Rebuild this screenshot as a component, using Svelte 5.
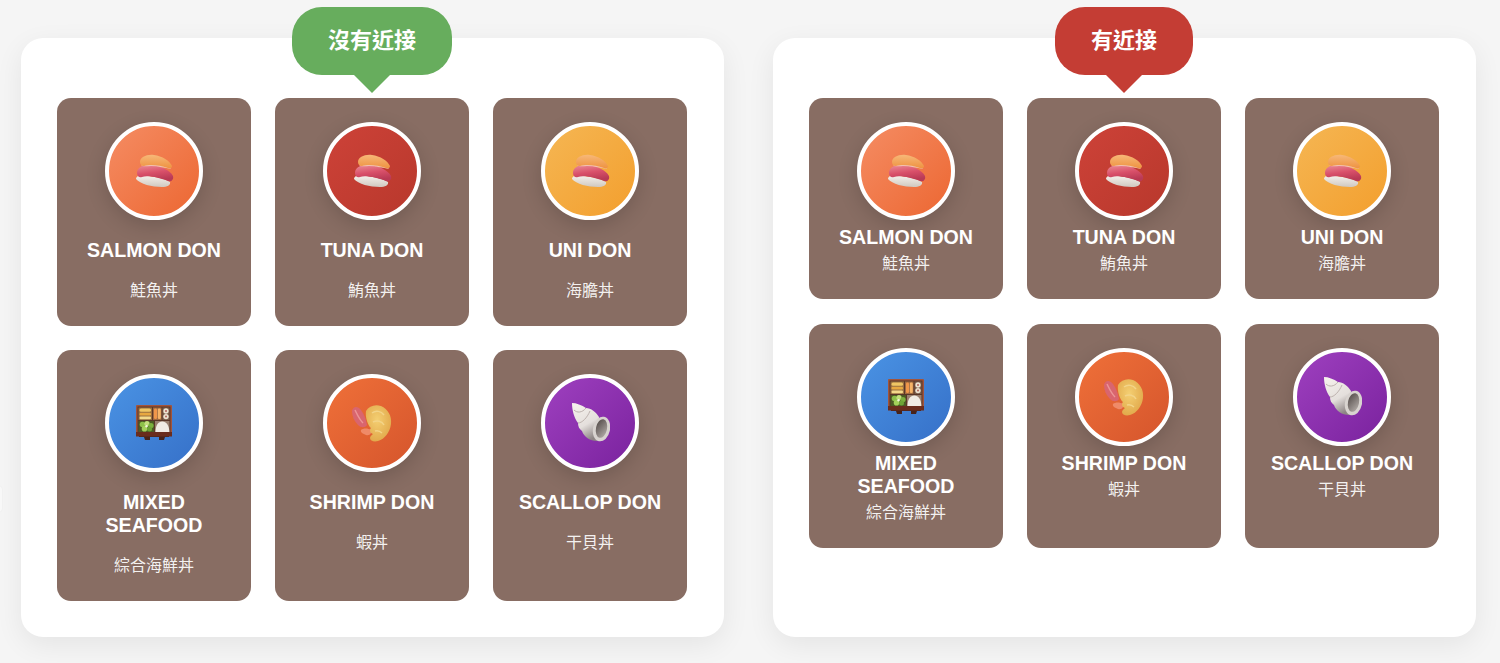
<script>
  const dons = [
    { name: 'SALMON DON', sub: '鮭魚丼', icon: 'sushi', bg: 'salmon' },
    { name: 'TUNA DON', sub: '鮪魚丼', icon: 'sushi', bg: 'tuna' },
    { name: 'UNI DON', sub: '海膽丼', icon: 'sushi', bg: 'uni' },
    { name: 'MIXED SEAFOOD', sub: '綜合海鮮丼', icon: 'bento', bg: 'mixed' },
    { name: 'SHRIMP DON', sub: '蝦丼', icon: 'shrimp', bg: 'shrimp' },
    { name: 'SCALLOP DON', sub: '干貝丼', icon: 'shell', bg: 'scallop' }
  ];

  // Left panel has no proximity between title and subtitle, right one does
  const panels = [
    { label: '沒有近接', tone: 'green', spacing: 'far' },
    { label: '有近接', tone: 'red', spacing: 'near' }
  ];
</script>

{#snippet sushi()}
  <svg viewBox="0 0 40 40" width="40" height="40" aria-hidden="true">
    <defs>
      <linearGradient id="tuna-slice" x1="0" y1="0" x2="0.3" y2="1">
        <stop offset="0" stop-color="#ec8f98" />
        <stop offset="0.55" stop-color="#d9506a" />
        <stop offset="1" stop-color="#b93a55" />
      </linearGradient>
      <linearGradient id="rice" x1="0" y1="0" x2="0" y2="1">
        <stop offset="0" stop-color="#f6f2ec" />
        <stop offset="1" stop-color="#cfc8c0" />
      </linearGradient>
      <linearGradient id="salmon-slice" x1="0" y1="0" x2="0" y2="1">
        <stop offset="0" stop-color="#f7b878" />
        <stop offset="1" stop-color="#ee9240" />
      </linearGradient>
    </defs>
    <path d="M2 28C2 24 8 24 14 25C22 26 32 28 36 31C37 34 33 36 28 36C18 36 6 33 2 28Z" fill="url(#rice)" />
    <path d="M3 22C3 16 10 13 18 14C27 15 36 19 39 25C40 29 37 31 34 30C26 27 14 24 8 26C5 27 3 25 3 22Z" fill="url(#tuna-slice)" />
    <path d="M7 14C10 10 18 10 24 11C30 12 35 15 37 18C31 17 24 15 17 15C13 15 9 16 7 14Z" fill="#f3c0b0" />
    <path d="M6 11C6 6 13 3 20 4C28 5 36 10 38 15C38 17 36 18 34 17C26 14 16 13 10 15C7 15 6 13 6 11Z" fill="url(#salmon-slice)" />
  </svg>
{/snippet}

{#snippet bento()}
  <svg viewBox="0 0 40 40" width="40" height="40" aria-hidden="true">
    <path d="M5 34h5l1 3h5v-3h9v3h5l1-3h4v-3H5z" fill="#47231a" />
    <rect x="2" y="2" width="36" height="31" rx="1" fill="#a3543a" />
    <rect x="2" y="29" width="36" height="4.500" fill="#6a2c1d" />
    <rect x="3.500" y="3.500" width="33" height="25.500" fill="#5a3628" />
    <rect x="4.500" y="4.500" width="13.500" height="12.500" fill="#9a7040" />
    <rect x="5.500" y="5.500" width="11.500" height="3.200" rx="1.500" fill="#f0c664" />
    <rect x="5.500" y="9.700" width="11.500" height="2.800" rx="1.200" fill="#e8a840" />
    <rect x="5.500" y="13.500" width="11.500" height="2.800" rx="1.200" fill="#f4d98a" />
    <rect x="19" y="4.500" width="8.500" height="12.500" fill="#a06a40" />
    <rect x="20" y="5.500" width="3" height="10.500" rx="1.200" fill="#f0964a" />
    <rect x="23.800" y="5.500" width="3" height="10.500" rx="1.200" fill="#f6b468" />
    <rect x="28.500" y="4.500" width="7" height="12.500" fill="#7a5c4a" />
    <circle cx="32" cy="8" r="2.700" fill="#ece2d0" />
    <circle cx="32" cy="8" r="1" fill="#b0605a" />
    <circle cx="32" cy="13.600" r="2.700" fill="#ece2d0" />
    <circle cx="32" cy="13.600" r="1" fill="#b0605a" />
    <rect x="4.500" y="18" width="15.500" height="11" fill="#4c5a24" />
    <circle cx="8.500" cy="21.500" r="2.800" fill="#8dc04a" />
    <circle cx="13" cy="20.500" r="2.600" fill="#c2e07c" />
    <circle cx="17" cy="22.500" r="2.600" fill="#7cb03e" />
    <circle cx="10.500" cy="25.800" r="2.800" fill="#a4d05a" />
    <circle cx="15.500" cy="26" r="2.500" fill="#6ea436" />
    <circle cx="12.500" cy="23.200" r="1.200" fill="#f1f5d8" />
    <rect x="21" y="18" width="14.500" height="11" fill="#9a8070" />
    <path d="M21.500 29c0-6.500 2.800-10.500 6.800-10.500s7 4 7 10.500z" fill="#f1ebe4" />
  </svg>
{/snippet}

{#snippet shrimp()}
  <svg viewBox="0 0 40 40" width="40" height="40" aria-hidden="true">
    <defs>
      <radialGradient id="prawn" cx="0.45" cy="0.4" r="0.7">
        <stop offset="0" stop-color="#f4cf72" />
        <stop offset="1" stop-color="#dfa446" />
      </radialGradient>
    </defs>
    <path d="M0 8C1 3 6 3 9 7C12 11 14 16 15 22C13 25 9 25 6 22C2 18 0 13 0 8Z" fill="#d9656e" />
    <path d="M3 7C5 11 7 16 11 20" stroke="#ec9496" stroke-width="1.500" fill="none" />
    <path d="M9 27C11 25 16 25 19 27C20 30 18 33 14 32C11 31 8 29 9 27Z" fill="#ef8a68" />
    <path d="M14 8C17 3 23 1 29 3C36 6 40 13 39 21C38 29 33 36 26 38C22 39 18 38 18 35C18 33 20 32 21 31C18 30 17 27 19 25C16 23 13 14 14 8Z" fill="url(#prawn)" />
    <path d="M20 10C24 7 29 8 32 12M21 19C25 17 30 18 32 22M23 28C26 27 28 28 30 30" stroke="#f3d488" stroke-width="1.500" fill="none" />
  </svg>
{/snippet}

{#snippet shell()}
  <svg viewBox="0 0 40 40" width="40" height="40" aria-hidden="true">
    <defs>
      <linearGradient id="shell-body" x1="0.2" y1="0" x2="0.6" y2="1">
        <stop offset="0" stop-color="#f5f1ec" />
        <stop offset="0.6" stop-color="#e4dfdc" />
        <stop offset="1" stop-color="#8d8584" />
      </linearGradient>
      <linearGradient id="shell-mouth" x1="0" y1="0" x2="1" y2="1">
        <stop offset="0" stop-color="#4e4644" />
        <stop offset="1" stop-color="#b9b2ae" />
      </linearGradient>
    </defs>
    <path d="M2 0C6 0 12 2 16 5C21 5 26 9 29 14L27 38C20 38 14 34 12 28C9 26 8 23 8 20C4 15 2 7 2 0Z" fill="url(#shell-body)" />
    <path d="M4 7C7 10 12 10 16 5M8 20C12 20 17 15 20 8" stroke="#bdb2ae" stroke-width="1" fill="none" />
    <ellipse cx="31.500" cy="26" rx="8.500" ry="12.500" transform="rotate(12 31.500 26)" fill="#d8d3cf" />
    <ellipse cx="31.500" cy="25.500" rx="5.500" ry="9.500" transform="rotate(12 31.500 25.500)" fill="url(#shell-mouth)" />
  </svg>
{/snippet}

<div class="edge-tab"></div>

<main class="page">
  {#each panels as panel}
    <section class="panel">
      <div class="grid {panel.spacing}">
        {#each dons as don, i}
          <article class="card {panel.spacing}">
            {#if i === 1}
              <div class="badge {panel.tone}">{panel.label}</div>
            {/if}
            <div class="thumb {don.bg}">
              {#if don.icon === 'sushi'}
                {@render sushi()}
              {:else if don.icon === 'bento'}
                {@render bento()}
              {:else if don.icon === 'shrimp'}
                {@render shrimp()}
              {:else}
                {@render shell()}
              {/if}
            </div>
            <h3>{don.name}</h3>
            <p>{don.sub}</p>
          </article>
        {/each}
      </div>
    </section>
  {/each}
</main>

<style>
  :global(body) {
    background: #f5f5f5;
    font-family: "Liberation Sans", "Noto Sans CJK TC", sans-serif;
  }

  .page {
    display: flex;
    gap: 49px;
    padding: 38px 24px 26px 21px;
    height: 663px;
    box-sizing: border-box;
    overflow: hidden;
  }

  .panel {
    width: 703px;
    box-sizing: border-box;
    padding: 60px 37px 36px 36px;
    background: #fff;
    border-radius: 22px;
    box-shadow: 0 8px 28px rgba(0, 0, 0, 0.07);
  }

  .grid {
    display: grid;
    grid-template-columns: repeat(3, 194px);
    column-gap: 24px;
    align-items: stretch;
    align-content: start;
  }

  .grid.far {
    row-gap: 24px;
  }

  .grid.near {
    row-gap: 25px;
  }

  .card {
    position: relative;
    display: flex;
    flex-direction: column;
    align-items: center;
    box-sizing: border-box;
    padding: 24px 20px 25px;
    background: #886d63;
    border-radius: 14px;
    color: #fff;
    text-align: center;
  }

  .card.far {
    gap: 19px;
  }

  .card.near {
    gap: 5.500px;
  }

  .thumb {
    display: flex;
    align-items: center;
    justify-content: center;
    width: 98px;
    height: 98px;
    flex-shrink: 0;
    box-sizing: border-box;
    border: 4px solid #fff;
    border-radius: 50%;
    box-shadow: 0 6px 20px rgba(0, 0, 0, 0.16);
  }

  .salmon { background: linear-gradient(135deg, #f58c63, #ec6732); }
  .tuna { background: linear-gradient(135deg, #cd4238, #b8382c); }
  .uni { background: linear-gradient(135deg, #f5b653, #f39f2e); }
  .mixed { background: linear-gradient(135deg, #4a93e4, #3670c8); }
  .shrimp { background: linear-gradient(135deg, #ef7039, #d5552c); }
  .scallop { background: linear-gradient(135deg, #9e40bf, #7a229e); }

  h3 {
    margin: 0;
    font-size: 19.600px;
    line-height: 23px;
    font-weight: 700;
  }

  p {
    margin: 0;
    font-size: 16px;
    line-height: 20px;
    color: rgba(255, 255, 255, 0.92);
  }

  .badge {
    position: absolute;
    left: 50%;
    top: -91px;
    transform: translateX(-50%);
    padding: 0 36px 7px;
    height: 68px;
    box-sizing: border-box;
    display: flex;
    align-items: center;
    border-radius: 30px;
    font-size: 22px;
    font-weight: 700;
    white-space: nowrap;
    color: #fff;
  }

  .badge::after {
    content: '';
    position: absolute;
    left: 50%;
    bottom: -18px;
    margin-left: -18px;
    border: 18px solid transparent;
    border-bottom: 0;
    border-top-color: inherit;
  }

  .badge.green { background: #67ad5d; border-color: #67ad5d; }
  .badge.red { background: #c43d34; border-color: #c43d34; }

  .edge-tab {
    position: fixed;
    left: -6px;
    top: 486px;
    width: 8px;
    height: 26px;
    border-radius: 4px;
    background: #f8f8f8;
    box-shadow: 0 0 2px rgba(0, 0, 0, 0.06);
  }
</style>
